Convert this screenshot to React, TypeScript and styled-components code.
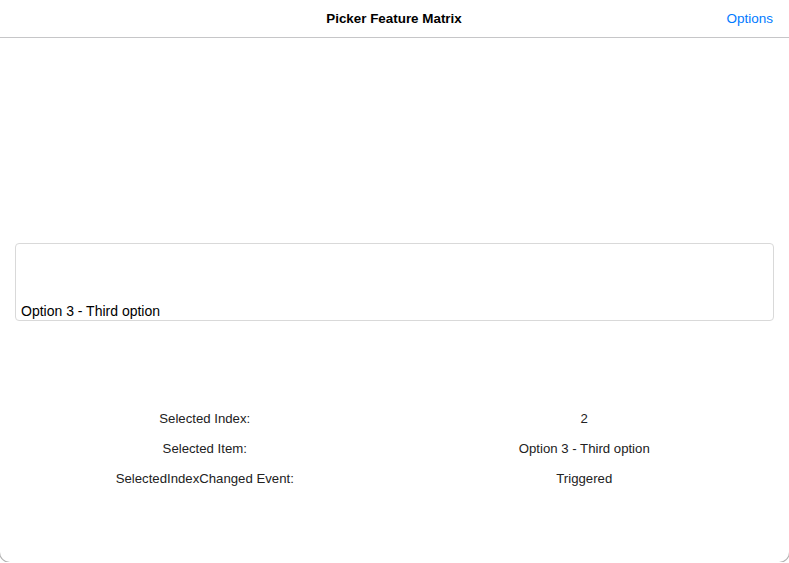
import React from "react";
import styled, { createGlobalStyle } from "styled-components";

const GlobalStyle = createGlobalStyle`
   html, body {
      margin: 0;
      padding: 0;
      background: #ffffff;
   }
   body {
      font-family: "Liberation Sans", Arial, sans-serif;
      color: #1c1c1e;
      overflow: hidden;
   }
`;

const Window = styled.div`
   width: 789px;
   height: 562px;
   background: #ffffff;
   border-radius: 0 0 10px 10px;
   box-shadow: 0 0 0 1px rgba(0, 0, 0, 0.3);
   overflow: hidden;
   display: flex;
   flex-direction: column;
`;

const NavBar = styled.header`
   height: 37px;
   border-bottom: 1px solid #c6c6c8;
   display: grid;
   grid-template-columns: 1fr auto 1fr;
   align-items: center;
   padding: 0 16px 0 15px;
`;

const Title = styled.h1`
   grid-column: 2;
   margin: 0;
   font-size: 13.4px;
   font-weight: bold;
   color: #000000;
`;

const NavButton = styled.button`
   grid-column: 3;
   justify-self: end;
   border: none;
   background: none;
   padding: 0;
   font-family: inherit;
   font-size: 13.5px;
   color: #007aff;
   cursor: pointer;
`;

const Content = styled.main`
   flex: 1;
   display: flex;
   flex-direction: column;
   padding: 205px 15px 0;
`;

const PickerBox = styled.div`
   height: 75px;
   border: 1px solid #d9d9d9;
   border-radius: 4px;
   display: flex;
   align-items: flex-end;
   padding: 0 5px 1px;
   font-size: 14px;
   color: #000000;
`;

const StatsTable = styled.div`
   margin-top: 82px;
   display: grid;
   grid-template-columns: 1fr 1fr;
   grid-auto-rows: 30px;
   align-items: center;
   text-align: center;
   font-size: 13.2px;
   color: #222222;
`;

const Cell = styled.div``;

interface StatProps {
   label: string;
   value: string;
}

const StatRow: React.FC<StatProps> = ({ label, value }) => (
   <>
      <Cell>{label}</Cell>
      <Cell>{value}</Cell>
   </>
);

const App: React.FC = () => {
   const options = ["Option 1 - First option", "Option 2 - Second option", "Option 3 - Third option"];
   const selectedIndex = 2;

   return (
      <>
         <GlobalStyle />
         <Window>
            <NavBar>
               <Title>Picker Feature Matrix</Title>
               <NavButton>Options</NavButton>
            </NavBar>
            <Content>
               <PickerBox>{options[selectedIndex]}</PickerBox>
               <StatsTable>
                  <StatRow label="Selected Index:" value={String(selectedIndex)} />
                  <StatRow label="Selected Item:" value={options[selectedIndex]} />
                  <StatRow label="SelectedIndexChanged Event:" value="Triggered" />
               </StatsTable>
            </Content>
         </Window>
      </>
   );
};

export default App;
